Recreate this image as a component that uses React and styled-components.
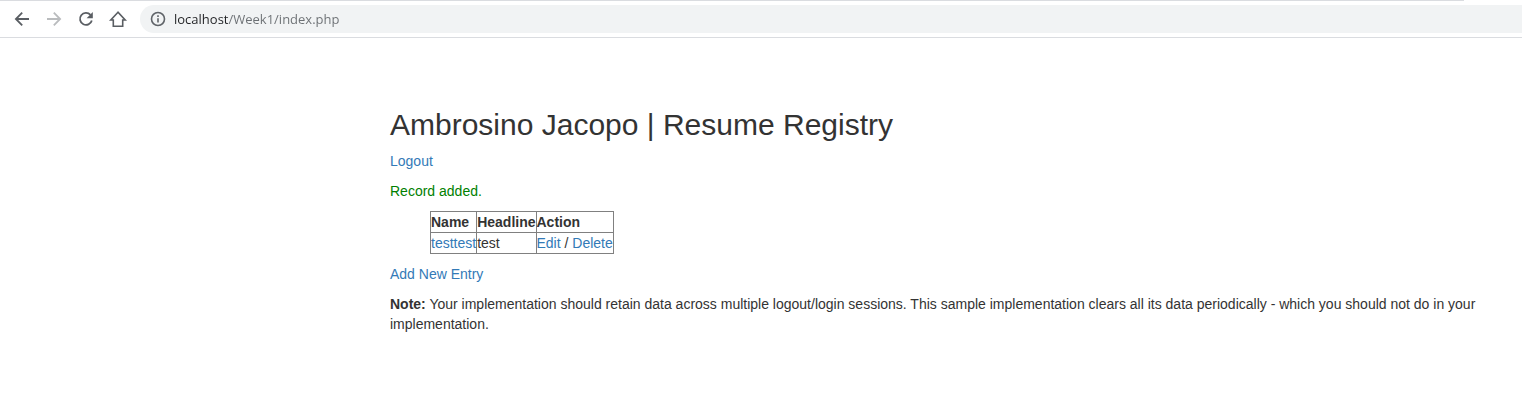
import React from "react";
import styled, { createGlobalStyle } from "styled-components";

const GlobalStyle = createGlobalStyle`
  *, *::before, *::after { box-sizing: border-box; }
  body {
    margin: 0;
    background: #fff;
    color: #333;
    font-family: "Liberation Sans", Arial, sans-serif;
    font-size: 14px;
    line-height: 20px;
  }
`;

const Toolbar = styled.header`
  display: flex;
  align-items: center;
  padding: 4px 0 4px 10px;
  border-bottom: 1px solid #dadce0;
`;

const TabEdge = styled.div`
  height: 1px;
  margin-right: 58px;
  background: #dadce0;
`;

const NavButtons = styled.nav`
  display: flex;
  gap: 8px;
  margin-right: 10px;
`;

const IconButton = styled.button`
  display: flex;
  align-items: center;
  justify-content: center;
  width: 24px;
  height: 24px;
  padding: 0;
  border: 0;
  background: none;
  color: ${(p) => (p.disabled ? "#babcbe" : "#5a5e63")};
`;

const Icon = styled.svg`
  display: block;
  flex: none;
  width: 20px;
  height: 20px;
  fill: none;
  stroke: currentColor;
  stroke-width: 1.8;
`;

const AddressBar = styled.label`
  display: flex;
  flex: 1;
  align-items: center;
  gap: 6px;
  height: 28px;
  padding-left: 8px;
  border-radius: 14px 0 0 14px;
  background: #f1f3f4;
  color: #5f6368;
`;

/* The host part is darker than the path that follows it. */
const AddressInput = styled.input`
  flex: 1;
  min-width: 0;
  height: 20px;
  padding: 0;
  border: 0;
  outline: 0;
  font-family: "Open Sans", "Noto Sans", sans-serif;
  font-size: 13px;
  line-height: 20px;
  color: transparent;
  caret-color: #202124;
  background: linear-gradient(to right, #202124 54px, #6b6f73 54px);
  background-clip: text;
  -webkit-background-clip: text;
`;

const Page = styled.main`
  padding: 70px 15px 60px 390px;
`;

const Title = styled.h1`
  margin: 0 0 10px;
  font-size: 30px;
  font-weight: 500;
  line-height: 33px;
`;

const Paragraph = styled.p`
  margin: 0 0 10px;
  color: ${(p) => (p.$success ? "green" : "inherit")};
`;

const Link = styled.a`
  color: #337ab7;
  text-decoration: none;
`;

const Table = styled.table`
  margin: 0 0 10px 40px;
  border: 1px solid #808080;
  border-collapse: collapse;
  border-spacing: 0;
`;

const HeadCell = styled.th`
  padding: 0;
  border: 1px solid #808080;
  text-align: left;
`;

const Cell = styled.td`
  padding: 0;
  border: 1px solid #808080;
`;

const entries = [{ name: "testtest", headline: "test" }];

/* Toolbar drawings on a 20-unit grid. */
const icons = {
  back: <path d="M17 10H4.500M10.200 3.700L3.900 10l6.300 6.300" />,
  forward: <path d="M3 10h12.500M9.800 3.700l6.300 6.300-6.300 6.300" />,
  reload: (
    <>
      <path d="M15.800 11.400A6 6 0 1 1 14.500 5.900" />
      <path d="M16.800 3v6.200h-6.200z" fill="currentColor" stroke="none" />
    </>
  ),
  home: <path d="M10 3.200L2.800 11H5.300V17.200h9.400V11h2.500z" strokeWidth="1.600" />,
  info: (
    <>
      <circle cx="10" cy="10" r="6.500" strokeWidth="1.600" />
      <path d="M10 9.200v4.200M10 6.300v1.600" strokeWidth="1.600" />
    </>
  ),
};

function Glyph({ name }) {
  return (
    <Icon viewBox="0 0 20 20" aria-hidden="true">
      {icons[name]}
    </Icon>
  );
}

export default function App() {
  return (
    <>
      <GlobalStyle />
      <TabEdge />
      <Toolbar>
        <NavButtons>
          <IconButton aria-label="Back"><Glyph name="back" /></IconButton>
          <IconButton aria-label="Forward" disabled><Glyph name="forward" /></IconButton>
          <IconButton aria-label="Reload"><Glyph name="reload" /></IconButton>
          <IconButton aria-label="Home"><Glyph name="home" /></IconButton>
        </NavButtons>
        <AddressBar>
          <Glyph name="info" />
          <AddressInput aria-label="Address" defaultValue="localhost/Week1/index.php" spellCheck={false} />
        </AddressBar>
      </Toolbar>
      <Page>
        <Title>Ambrosino Jacopo | Resume Registry</Title>
        <Paragraph><Link href="#logout">Logout</Link></Paragraph>
        <Paragraph $success>Record added.</Paragraph>
        <Table>
          <thead>
            <tr>
              <HeadCell>Name</HeadCell>
              <HeadCell>Headline</HeadCell>
              <HeadCell>Action</HeadCell>
            </tr>
          </thead>
          <tbody>
            {entries.map((e) => (
              <tr key={e.name}>
                <Cell><Link href="#view">{e.name}</Link></Cell>
                <Cell>{e.headline}</Cell>
                <Cell><Link href="#edit">Edit</Link> / <Link href="#delete">Delete</Link></Cell>
              </tr>
            ))}
          </tbody>
        </Table>
        <Paragraph><Link href="#add">Add New Entry</Link></Paragraph>
        <Paragraph>
          <b>Note:</b> Your implementation should retain data across multiple logout/login sessions. This sample
          implementation clears all its data periodically - which you should not do in your implementation.
        </Paragraph>
      </Page>
    </>
  );
}
